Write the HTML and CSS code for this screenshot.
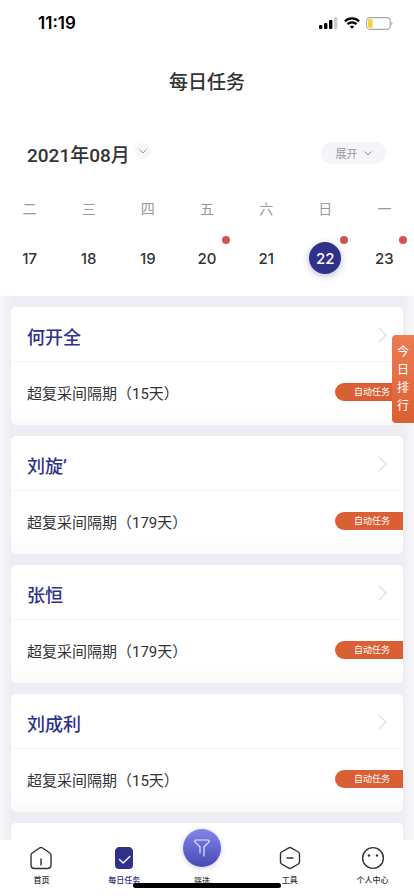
FILE: index.html
```html
<!DOCTYPE html>
<html lang="zh-CN">
<head>
<meta charset="utf-8">
<meta name="viewport" content="width=device-width, initial-scale=1">
<title>每日任务</title>
<link rel="stylesheet" href="styles.css">
</head>
<body>
<div class="status">
  <span class="clock">11:19</span>
  <div class="indicators">
    <svg width="19" height="12" viewBox="0 0 19 12"><rect x="0" y="8" width="3.4" height="4" rx="1"/><rect x="5" y="6" width="3.4" height="6" rx="1"/><rect x="10" y="3" width="3.4" height="9" rx="1"/><rect x="15" y="0" width="3.4" height="12" rx="1" fill="#ccc"/></svg>
    <svg width="16" height="12" viewBox="0 0 16 12" fill="none" stroke="#000" stroke-width="2.3"><path d="M.9 4.3a10.2 10.2 0 0 1 14.2 0M3.5 7.2a6.4 6.4 0 0 1 9 0"/><path d="M8 11.8 5.8 9.6a3.2 3.2 0 0 1 4.4 0z" fill="#000" stroke="none"/></svg>
    <svg width="27" height="13" viewBox="0 0 27 13"><rect x=".6" y=".6" width="23.6" height="11.8" rx="3.4" fill="none" stroke="#a6a6a6" stroke-width="1.1"/><rect x="2" y="2" width="4.6" height="9" rx="1.6" fill="#f7ce46"/><path d="M25.3 4.4c1.7.7 1.7 3.5 0 4.2z" fill="#a6a6a6"/></svg>
  </div>
</div>
<header class="header"><h1>每日任务</h1></header>
<section class="calendar">
  <div class="month-row">
    <button class="month" type="button"><span>2021年08月</span><span class="month-arrow"><svg width="8" height="5" viewBox="0 0 8 5"><path d="M.5.5 4 4 7.5.5"/></svg></span></button>
    <button class="expand" type="button"><span>展开</span><svg width="8" height="5" viewBox="0 0 8 5"><path d="M.5.5 4 4 7.5.5"/></svg></button>
  </div>
  <div class="week names"><span>二</span><span>三</span><span>四</span><span>五</span><span>六</span><span>日</span><span>一</span></div>
  <div class="week days">
    <button type="button">17</button><button type="button">18</button><button type="button">19</button><button type="button" class="dot">20</button><button type="button">21</button><button type="button" class="dot active">22</button><button type="button" class="dot">23</button>
  </div>
</section>
<main class="tasks">
  <article class="card">
    <a class="person" href="#"><h2>何开全</h2><svg width="9" height="16" viewBox="0 0 9 16"><path d="m1 1 7 7-7 7"/></svg></a>
    <div class="task"><p>超复采间隔期（15天）</p><span class="tag">自动任务</span></div>
  </article>
  <article class="card">
    <a class="person" href="#"><h2>刘旋’</h2><svg width="9" height="16" viewBox="0 0 9 16"><path d="m1 1 7 7-7 7"/></svg></a>
    <div class="task"><p>超复采间隔期（179天）</p><span class="tag">自动任务</span></div>
  </article>
  <article class="card">
    <a class="person" href="#"><h2>张恒</h2><svg width="9" height="16" viewBox="0 0 9 16"><path d="m1 1 7 7-7 7"/></svg></a>
    <div class="task"><p>超复采间隔期（179天）</p><span class="tag">自动任务</span></div>
  </article>
  <article class="card">
    <a class="person" href="#"><h2>刘成利</h2><svg width="9" height="16" viewBox="0 0 9 16"><path d="m1 1 7 7-7 7"/></svg></a>
    <div class="task"><p>超复采间隔期（15天）</p><span class="tag">自动任务</span></div>
  </article>
  <article class="card"></article>
</main>
<button class="ranking" type="button">今日排行</button>
<nav class="tabs">
  <a href="#"><svg width="24" height="24" viewBox="0 0 24 24"><path d="M3.2 7 10.4 2q1.6-1 3.2 0l7.2 5q1.2.9 1.2 2.4V19q0 3.5-3.500 3.500h-13Q2 22.500 2 19V9.400Q2 7.900 3.200 7zM12 13v6"/></svg><span>首页</span></a>
  <a href="#" class="current"><svg width="24" height="24" viewBox="0 0 24 24"><path class="solid" d="M6.500 1h11q.8 0 1.300.6l1.600 1.700q.6.700.6 1.500V19q0 4-4 4H7q-4 0-4-4V4.800q0-.8.6-1.500l1.600-1.700Q5.700 1 6.500 1z"/><path class="tick" d="m7.500 13.500 3.600 3.500 6.700-6.500"/></svg><span>每日任务</span></a>
  <a href="#" class="filter"><span class="filter-button"><svg width="18" height="18" viewBox="0 0 18 18"><path d="M7 14V8L2.200 3.200Q1 1 3 1h12q2 0 .8 2.200L11 8v9"/></svg></span><span>筛选</span></a>
  <a href="#"><svg width="24" height="24" viewBox="0 0 24 24"><path d="M10.800 1.800q1.200-.7 2.400 0L20.300 6q1.200.7 1.200 2v8q0 1.300-1.200 2l-7.100 4.200q-1.200.7-2.400 0L3.700 18q-1.200-.7-1.200-2V8q0-1.300 1.200-2zM9 12h6"/></svg><span>工具</span></a>
  <a href="#"><svg width="24" height="24" viewBox="0 0 24 24"><circle cx="12" cy="12" r="10.400"/><circle class="eye" cx="8" cy="9.500" r="1.200"/><circle class="eye" cx="16" cy="9.500" r="1.200"/></svg><span>个人中心</span></a>
</nav>
<div class="home-bar"></div>
</body>
</html>
```
FILE: styles.css
```css
* {
  box-sizing: border-box;
}

body {
  display: flex;
  flex-direction: column;
  height: 100vh;
  margin: 0;
  overflow: hidden;
  background: #fff;
  color: #333;
  font-family: Roboto, "Noto Sans CJK SC", sans-serif;
}

h1,
h2,
p {
  margin: 0;
}

button {
  padding: 0;
  border: 0;
  background: none;
  color: inherit;
  font: inherit;
}

a {
  color: inherit;
  text-decoration: none;
}

svg {
  flex: none;
}

.status {
  display: flex;
  flex: none;
  align-items: center;
  justify-content: space-between;
  height: 46px;
  padding: 0 21px 0 38px;
}

.clock {
  color: #000;
  font-family: Inter, sans-serif;
  font-size: 17px;
  font-weight: 600;
}

.indicators {
  display: flex;
  align-items: center;
  gap: 6px;
}

.header {
  flex: none;
  padding: 22px 0;
  text-align: center;
}

.header h1 {
  font-size: 19px;
  font-weight: 500;
  line-height: 30px;
}

.calendar {
  flex: none;
  height: 176px;
  padding-top: 18px;
}

.month-row {
  display: flex;
  align-items: center;
  justify-content: space-between;
  height: 30px;
  padding: 0 28px 0 27px;
}

.month {
  display: flex;
  align-items: center;
  gap: 5px;
  font-size: 19px;
  font-weight: 500;
}

.month-arrow {
  display: flex;
  align-items: center;
  justify-content: center;
  width: 16px;
  height: 16px;
  margin-bottom: 4px;
  border-radius: 50%;
  background: #f6f6f7;
}

.month svg,
.expand svg {
  fill: none;
  stroke: #999;
}

.expand {
  display: flex;
  align-items: center;
  justify-content: center;
  gap: 6px;
  width: 65px;
  height: 22px;
  border-radius: 11px;
  background: #f5f4fa;
  color: #999;
  font-size: 11px;
}

.week {
  display: grid;
  grid-template-columns: repeat(7, 1fr);
  justify-items: center;
}

.names {
  margin-top: 31px;
  color: #999;
  font-size: 14px;
  line-height: 20px;
}

.days {
  margin-top: 23px;
  font-family: Inter, sans-serif;
}

.days button {
  position: relative;
  width: 32px;
  height: 32px;
  border-radius: 50%;
  font-size: 15px;
  font-weight: 500;
}

.days .active {
  background: #30318b;
  box-shadow: 0 2px 7px #30318b55;
  color: #fff;
}

.dot::after {
  content: "";
  position: absolute;
  top: -6px;
  right: -7px;
  width: 8px;
  height: 8px;
  border-radius: 50%;
  background: #cf5650;
}

.tasks {
  display: flex;
  flex: 1;
  flex-direction: column;
  gap: 11px;
  min-height: 0;
  padding: 11px;
  overflow: hidden;
  background: linear-gradient(90deg, #f8f8fb, #eeedf3 11px, #eeedf3 calc(100% - 11px), #f8f8fb);
}

.card {
  flex: none;
  height: 118px;
  border-radius: 5px;
  overflow: hidden;
  background: linear-gradient(#fff 85%, #fafafb);
}

.person {
  display: flex;
  align-items: center;
  justify-content: space-between;
  height: 55px;
  padding: 4px 16px 0;
  border-bottom: 1px solid #f5f5f7;
  color: #30318b;
}

.person h2 {
  font-size: 18px;
  font-weight: 500;
}

.person svg {
  margin-bottom: 2px;
  fill: none;
  stroke: #ddd;
  stroke-width: 1.2;
}

.task {
  display: flex;
  align-items: center;
  justify-content: space-between;
  height: 60px;
  padding-left: 16px;
  font-size: 15px;
}

.tag {
  width: 68px;
  padding-left: 19px;
  border-radius: 9px 0 0 9px;
  background: #d96035;
  color: #fff;
  font-size: 9px;
  line-height: 18px;
}

.ranking {
  position: fixed;
  top: 335px;
  right: 0;
  width: 22px;
  height: 88px;
  padding: 8px 5px;
  border-radius: 4px 0 0 4px;
  background: linear-gradient(#ec7c53, #d96035);
  color: #fff;
  font-size: 12px;
  line-height: 18px;
}

.tabs {
  position: relative;
  display: grid;
  flex: none;
  grid-template-columns: repeat(5, 1fr);
  height: 56px;
  background: #fff;
  font-size: 8px;
  font-weight: 500;
  line-height: 12px;
}

.tabs a {
  display: flex;
  flex-direction: column;
  align-items: center;
  gap: 5px;
  padding-top: 6px;
}

.tabs svg {
  fill: none;
  stroke: #333;
  stroke-width: 1.4;
  stroke-linecap: round;
  stroke-linejoin: round;
}

.tabs .current {
  color: #30318b;
}

.tabs .solid {
  fill: #30318b;
  stroke: none;
}

.tabs .tick {
  stroke: #fff;
}

.tabs .eye {
  fill: #333;
  stroke: none;
}

.tabs .filter {
  justify-self: center;
  gap: 9px;
  width: 66px;
  height: 66px;
  margin: -15px 10px 0 0;
  padding-top: 4px;
  border-radius: 50%;
  background: #fff;
}

.filter-button {
  display: flex;
  flex: none;
  align-items: center;
  justify-content: center;
  width: 38px;
  height: 38px;
  border-radius: 50%;
  background: linear-gradient(#8485e8, #4649b5);
  box-shadow: 0 1px 5px #5557c455;
}

.tabs .filter-button svg {
  stroke: #e6e6ff;
  stroke-width: 1.2;
}

.home-bar {
  position: fixed;
  bottom: 8px;
  left: 50%;
  width: 148px;
  height: 5px;
  border-radius: 3px;
  background: #000;
  transform: translateX(-50%);
}
```
